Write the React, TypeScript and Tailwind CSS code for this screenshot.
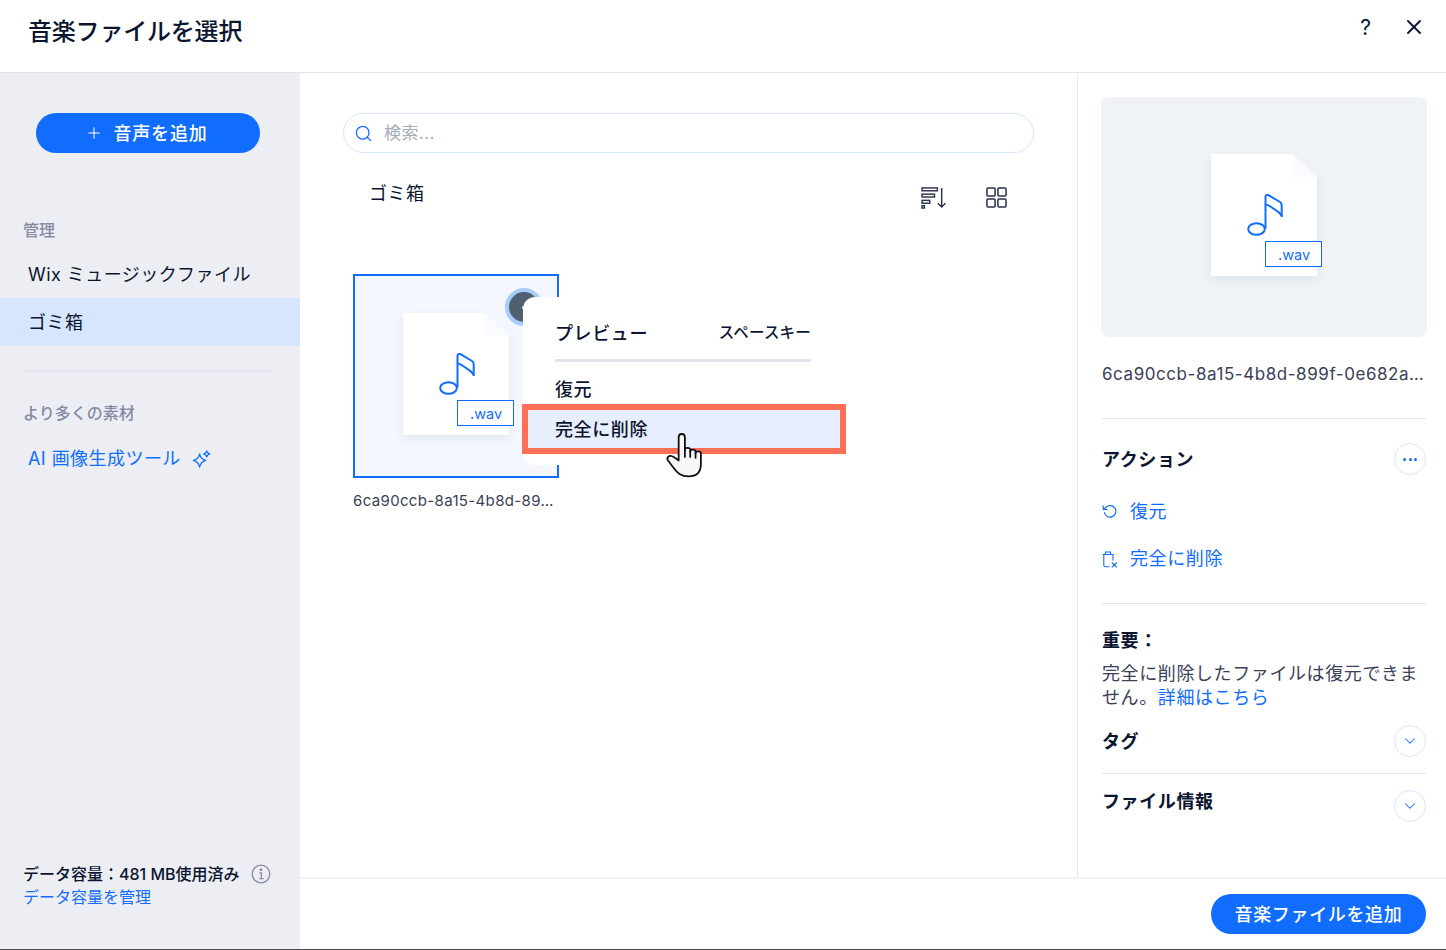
import React from "react";
import { Plus, Search, X, ChevronDown } from "lucide-react";

function Note() {
  return (
    <svg viewBox="0 0 36 42" className="w-[36px] h-[42px]" fill="none" stroke="#116dff" strokeWidth="2" strokeLinecap="round" strokeLinejoin="round">
      <ellipse cx="9.500" cy="35" rx="8.300" ry="5.800" />
      <path d="M18.500 34V3c0-2 1.500-2.700 3-1.800L33 8c1.200.7 1.700 1.500 1.700 3v11" />
      <path d="M18.800 10.500c1.500 0 3 .8 5 2.300 4.500 3.200 9 5 10.900 9.200" />
    </svg>
  );
}

function FileThumb({ fold }: { fold: string }) {
  return (
    <div className="relative w-[106px] h-[122px]">
      <div className="w-full h-full bg-white shadow-[0_4px_10px_rgba(22,45,61,0.08)] [clip-path:polygon(-10%_-10%,76%_-10%,76%_0,100%_19%,110%_19%,110%_115%,-10%_115%)] pl-[36px] pt-[40px]">
        <Note />
      </div>
      <div className={`absolute right-0 top-0 w-[25px] h-[23px] [clip-path:polygon(0_0,100%_100%,0_100%)] ${fold}`} />
      <div className="absolute left-[54px] top-[87px] w-[57px] h-[26px] bg-white border border-[#116dff] text-[#116dff] text-[14.500px] leading-[25px] pl-[12px]">.wav</div>
    </div>
  );
}

function CircleBtn({ children }: { children: React.ReactNode }) {
  return (
    <div className="w-[32px] h-[32px] rounded-full border border-[#d6e6fe] bg-white flex items-center justify-center text-[#116dff] shrink-0">
      {children}
    </div>
  );
}

function HandCursor() {
  return (
    <svg viewBox="0 0 40 54" className="absolute left-[664px] top-[432px] w-[40px] h-[48px]" fill="#f7f7f7" stroke="#111" strokeWidth="2" strokeLinejoin="round" strokeLinecap="round">
      <path d="M14 30V6c0-5 7-5 7 0v14c0-3 6-3 6 0v2c0-3 6-3 6 0v2c0-3 6-3 6 0v12c0 9-5 14-14 14-8 0-12-3-17-10l-6-8c-2-3 1-6 4-5 3 .8 5 3 8 5z" />
      <path d="M21 20v8M27 22v6M33 24v5" fill="none" />
    </svg>
  );
}

export default function App() {
  return (
    <div className="relative w-[1446px] h-[950px] overflow-hidden bg-white text-[#162d3d] font-['Inter','Noto_Sans_CJK_JP',sans-serif] flex flex-col border-b border-[#4a4a4a]">
      <header className="h-[73px] shrink-0 border-b border-[#dfe5eb] flex items-center justify-between pl-[28px] pr-[20px]">
        <h1 className="text-[24px] font-medium text-[#0c1530] leading-none -mt-[9px] tracking-[-0.2px]">音楽ファイルを選択</h1>
        <div className="flex items-center gap-[31px] -mt-[18px]">
          <span className="text-[21px] text-[#0c1530] leading-none">?</span>
          <X className="w-[24px] h-[24px] text-[#0c1530]" strokeWidth={1.9} />
        </div>
      </header>

      <div className="flex flex-1 min-h-0">
        <aside className="w-[300px] shrink-0 bg-[#eceef4] flex flex-col">
          <div className="pt-[40px] px-[36px]">
            <div className="h-[40px] w-[224px] rounded-full bg-[#116dff] text-white flex items-center justify-center gap-[11px] text-[18px] font-medium tracking-[0.8px] pr-[4px]">
              <Plus className="w-[18px] h-[18px]" strokeWidth={1.400} />
              <span>音声を追加</span>
            </div>
          </div>
          <div className="pl-[23px] mt-[66px] text-[16px] font-medium text-[#868aa5] leading-[22px]">管理</div>
          <div className="pl-[28px] mt-[21px] text-[18px] leading-[26px] tracking-[0.45px] text-[#0c1530] h-[35px]">Wix ミュージックファイル</div>
          <div className="pl-[28px] mt-[1px] h-[48px] pt-[1px] bg-[#d6e6fe] text-[18px] leading-[47px] tracking-[0.5px] text-[#0c1530]">ゴミ箱</div>
          <div className="ml-[23px] w-[250px] h-[2px] bg-[#e2e7f0] mt-[24px]" />
          <div className="pl-[23px] mt-[30px] text-[16px] font-medium text-[#868aa5] leading-[22px]">より多くの素材</div>
          <div className="pl-[28px] mt-[22px] flex items-center gap-[11px] text-[18px] tracking-[0.45px] text-[#116dff] leading-[26px]">
            <span>AI 画像生成ツール</span>
            <svg viewBox="0 0 20 20" className="w-[19px] h-[19px]" fill="none" stroke="#116dff" strokeWidth="1.300" strokeLinejoin="round">
              <path d="M8 4c.8 4 2.300 5.800 6.500 7-4.200 1.200-5.700 3-6.500 7-.8-4-2.300-5.800-6.500-7C5.700 9.800 7.200 8 8 4z" />
              <path d="M15.500 1l1.100 2 2 1.100-2 1.100-1.100 2-1.100-2-2-1.100 2-1.100z" />
            </svg>
          </div>
          <div className="mt-auto pl-[23px] pb-[41px]">
            <div className="flex items-center text-[16px] leading-[24px] text-[#0c1530]">
              <span className="font-medium">データ容量：481 MB使用済み</span>
              <svg viewBox="0 0 20 20" className="w-[20px] h-[20px] ml-[11px]" fill="none" stroke="#868aa5" strokeWidth="1.300">
                <circle cx="10" cy="10" r="8.800" />
                <path d="M8.300 8.800H10.400V14.500M8.200 14.700H12.600" />
                <circle cx="10" cy="5.800" r="0.700" fill="#868aa5" />
              </svg>
            </div>
            <div className="text-[16px] leading-[22px] text-[#116dff]">データ容量を管理</div>
          </div>
        </aside>

        <div className="flex-1 min-w-0 flex flex-col">
          <div className="flex-1 min-h-0 flex">
            <main className="w-[778px] shrink-0 border-r border-[#e7ebf1] pl-[43px]">
              <div className="mt-[40px] w-[691px] h-[40px] rounded-full border border-[#d6e6fe] flex items-center pl-[10px] gap-[11px]">
                <Search className="w-[19px] h-[19px] text-[#116dff]" strokeWidth={1.6} />
                <span className="text-[17px] text-[#a8aabd] tracking-[0.4px] pt-[1px]">検索...</span>
              </div>
              <div className="flex items-start justify-between w-[664px] mt-[28px] pl-[26px]">
                <span className="text-[18px] leading-[26px] tracking-[0.5px] text-[#0c1530]">ゴミ箱</span>
                <div className="flex items-center gap-[38px] mt-[5px]">
                  <svg viewBox="0 0 28 24" className="w-[27px] h-[23px]" fill="none" stroke="#2a3150" strokeWidth="1.500">
                    <rect x="1" y="2" width="16" height="3" />
                    <rect x="1" y="8.500" width="13" height="3" />
                    <rect x="1" y="15" width="8" height="3" />
                    <rect x="1" y="20.500" width="2.500" height="2.500" />
                    <path d="M21.500 2v20M17.500 18l4 4 4-4" />
                  </svg>
                  <svg viewBox="0 0 22 22" className="w-[21px] h-[21px]" fill="none" stroke="#2a3150" strokeWidth="1.600">
                    <rect x="1" y="1" width="8.500" height="8.500" rx="1" />
                    <rect x="12.500" y="1" width="8.500" height="8.500" rx="1" />
                    <rect x="1" y="12.500" width="8.500" height="8.500" rx="1" />
                    <rect x="12.500" y="12.500" width="8.500" height="8.500" rx="1" />
                  </svg>
                </div>
              </div>
              <div className="ml-[10px] mt-[65px] w-[206px] h-[204px] border-2 border-[#116dff] bg-[#f4f7ff] pl-[48px] pt-[37px]">
                <FileThumb fold="bg-[#fafbfe]" />
              </div>
              <div className="ml-[10px] mt-[12px] text-[15px] leading-[22px] text-[#3b4057] whitespace-nowrap tracking-[0.35px]">6ca90ccb-8a15-4b8d-89…</div>
            </main>

            <section className="flex-1 min-w-0 pl-[23px] pr-[20px]">
              <div className="mt-[24px] w-[326px] h-[240px] rounded-lg bg-[#eff3f8] pt-[57px] pl-[110px]">
                <FileThumb fold="bg-[#fafbfc]" />
              </div>
              <div className="mt-[24px] pl-[1px] text-[17px] leading-[26px] text-[#3b4057] whitespace-nowrap tracking-[0.56px]">6ca90ccb-8a15-4b8d-899f-0e682a…</div>
              <div className="ml-[1px] mt-[31px] h-px bg-[#dfe5eb]" />
              <div className="mt-[24px] flex items-center justify-between">
                <span className="ml-[1px] text-[18px] font-bold tracking-[0.6px] text-[#0c1530]">アクション</span>
                <CircleBtn>
                  <span className="flex gap-[2.500px]">
                    <i className="w-[3px] h-[3px] rounded-full bg-[#116dff]" />
                    <i className="w-[3px] h-[3px] rounded-full bg-[#116dff]" />
                    <i className="w-[3px] h-[3px] rounded-full bg-[#116dff]" />
                  </span>
                </CircleBtn>
              </div>
              <div className="ml-[1px] mt-[24px] flex items-center text-[18px] leading-[26px] tracking-[0.6px] text-[#116dff] gap-[12px]">
                <svg viewBox="0 0 16 16" className="w-[16px] h-[16px]" fill="none" stroke="#116dff" strokeWidth="1.200" strokeLinecap="round">
                  <path d="M2.400 8.500A5.800 5.800 0 1 0 4 3.200L1.500 5.500" />
                  <path d="M1 1.800 1.500 5.500 5.200 5.500" />
                </svg>
                <span>復元</span>
              </div>
              <div className="ml-[1px] mt-[21px] flex items-center text-[18px] leading-[26px] tracking-[0.6px] text-[#116dff] gap-[12px]">
                <svg viewBox="0 0 16 17" className="w-[16px] h-[17px]" fill="none" stroke="#116dff" strokeWidth="1.100">
                  <path d="M.5 3.500h11M3.500 3.500V1h5v2.500M1.800 3.500V14c0 1 .6 1.800 1.700 1.800h4M11 3.500v6M9.800 11.500l5 4.800M14.800 11.500l-5 4.800" />
                </svg>
                <span>完全に削除</span>
              </div>
              <div className="ml-[1px] mt-[31px] h-px bg-[#dfe5eb]" />
              <div className="ml-[1px] mt-[25px] text-[18px] font-bold leading-[24px] tracking-[0.6px] text-[#0c1530]">重要：</div>
              <p className="ml-[1px] mt-[9px] text-[18px] leading-[24px] tracking-[0.6px] text-[#3b4057] whitespace-nowrap">
                完全に削除したファイルは復元できま<br />せん。<span className="text-[#116dff]">詳細はこちら</span>
              </p>
              <div className="mt-[15px] flex items-center justify-between">
                <span className="ml-[1px] text-[18px] font-bold tracking-[0.6px] text-[#0c1530]">タグ</span>
                <CircleBtn><ChevronDown className="w-[18px] h-[18px]" strokeWidth={1.400} /></CircleBtn>
              </div>
              <div className="ml-[1px] mt-[16px] h-px bg-[#dfe5eb]" />
              <div className="mt-[16px] flex items-start justify-between">
                <span className="ml-[1px] text-[18px] font-bold tracking-[0.6px] text-[#0c1530] leading-[24px]">ファイル情報</span>
                <CircleBtn><ChevronDown className="w-[18px] h-[18px]" strokeWidth={1.400} /></CircleBtn>
              </div>
            </section>
          </div>
          <footer className="h-[72px] shrink-0 border-t-2 border-[#f2f4f7] flex items-center justify-end pr-[20px]">
            <div className="h-[40px] w-[215px] rounded-full bg-[#116dff] text-white text-[18px] tracking-[0.65px] font-medium flex items-center justify-center">音楽ファイルを追加</div>
          </footer>
        </div>
      </div>

      {/* card action button and context menu, lying over the card */}
      <div className="absolute left-[505px] top-[288px] w-[38px] h-[38px] rounded-full border-[4px] border-[#a8cdfd] bg-[#4f6070] flex items-center justify-center">
        <i className="w-[3px] h-[3px] rounded-full bg-white -ml-[2px]" />
      </div>
      <div className="absolute left-[523px] top-[297px] w-[322px] h-[168px] rounded-l-[12px] bg-white pt-[24px]">
        <div className="ml-[32px] w-[256px] flex items-center justify-between h-[24px] text-[#0c1530]">
          <span className="text-[18px] font-medium tracking-[0.6px]">プレビュー</span>
          <span className="text-[15.500px] font-medium tracking-[0.2px]">スペースキー</span>
        </div>
        <div className="ml-[32px] w-[256px] h-[3px] bg-[#dfe4ee] mt-[14px]" />
        <div className="ml-[32px] mt-[15px] text-[18px] font-medium tracking-[0.5px] leading-[26px] text-[#0c1530]">復元</div>
      </div>
      <div className="absolute left-[522px] top-[404px] w-[324px] h-[50px] border-[6px] border-[#ff6f57] bg-[#e7eefd] pl-[27px] text-[18px] font-medium tracking-[0.6px] leading-[40px] text-[#0c1530]">完全に削除</div>
      <HandCursor />
    </div>
  );
}
